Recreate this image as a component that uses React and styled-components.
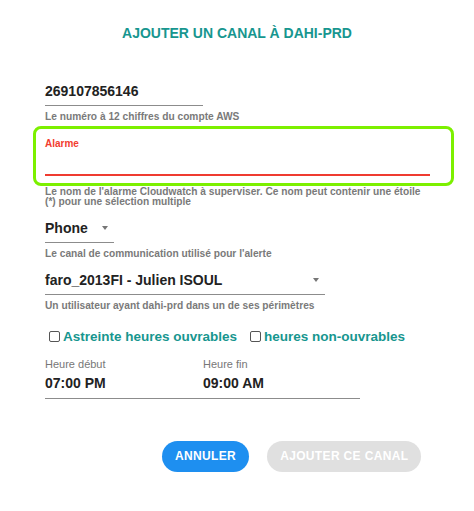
import styled, { createGlobalStyle } from "styled-components";

const GlobalStyle = createGlobalStyle`
  body {
    margin: 0;
    background: #ffffff;
    font-family: "Liberation Sans", Arial, sans-serif;
  }
`;

const Dialog = styled.div`
  width: 474px;
  height: 511px;
  box-sizing: border-box;
  padding: 24px 0 0 45px;
`;

const Title = styled.h2`
  margin: 0 0 0 -45px;
  text-align: center;
  font-size: 14px;
  line-height: 18px;
  font-weight: 700;
  color: #17968f;
`;

const Field = styled.div`
  width: ${(props) => props.width}px;
  margin-top: ${(props) => props.top}px;
  display: flex;
  align-items: center;
  justify-content: space-between;
  padding-bottom: 5px;
  border-bottom: 1px solid #8c8c8c;
  font-size: 14px;
  line-height: 18px;
  font-weight: 700;
  color: #222;
`;

const Helper = styled.div`
  width: 386px;
  margin-top: ${(props) => props.top}px;
  font-size: 10.2px;
  line-height: 10.5px;
  font-weight: 700;
  color: #7a7a7a;
`;

const Highlight = styled.div`
  width: 421px;
  height: 60px;
  box-sizing: border-box;
  margin: 3px 0 0 -12px;
  padding: 9px 21px 0 9px;
  border: 3px solid #7cf000;
  border-radius: 8px;
`;

const ErrorLabel = styled.div`
  font-size: 10px;
  line-height: 12px;
  font-weight: 700;
  color: #f23c2f;
`;

const ErrorLine = styled.div`
  height: 24px;
  border-bottom: 2px solid #ef3b30;
`;

const Caret = styled.span`
  width: 0;
  height: 0;
  margin-right: 6px;
  border-left: 3.5px solid transparent;
  border-right: 3.5px solid transparent;
  border-top: 4px solid #767676;
`;

const CheckRow = styled.div`
  display: flex;
  align-items: center;
  gap: 13px;
  margin: 17px 0 0 4px;
`;

const Check = styled.label`
  display: flex;
  align-items: center;
  gap: 3px;
  font-size: 13.5px;
  line-height: 16px;
  font-weight: 700;
  color: #17968f;
`;

const Box = styled.span`
  width: 9px;
  height: 9px;
  border: 1px solid #555;
  border-radius: 2px;
  background: #fff;
`;

const TimeRow = styled.div`
  display: grid;
  grid-template-columns: 158px 157px;
  width: 315px;
  margin-top: 12px;
  padding-bottom: 6px;
  border-bottom: 1px solid #8c8c8c;
`;

const TimeLabel = styled.div`
  font-size: 11px;
  line-height: 14px;
  color: #777;
`;

const TimeValue = styled.div`
  margin-top: 3px;
  font-size: 14px;
  line-height: 18px;
  font-weight: 700;
  color: #222;
`;

const Actions = styled.div`
  display: flex;
  gap: 18px;
  margin: 42px 0 0 117px;
`;

const Button = styled.button`
  height: 31px;
  padding: 0 13px;
  border: none;
  border-radius: 16px;
  font-family: "Liberation Sans", Arial, sans-serif;
  font-size: 12px;
  letter-spacing: 0.35px;
  font-weight: 700;
  color: #fff;
  background: ${(props) => (props.disabled ? "#e0e0e0" : "#1e8ff0")};
`;

export default function App() {
  return (
    <>
      <GlobalStyle />
      <Dialog>
        <Title>AJOUTER UN CANAL À DAHI-PRD</Title>
        <Field width={158} top={40}>269107856146</Field>
        <Helper top={6}>Le numéro à 12 chiffres du compte AWS</Helper>
        <Highlight>
          <ErrorLabel>Alarme</ErrorLabel>
          <ErrorLine />
        </Highlight>
        <Helper top={1}>
          Le nom de l'alarme Cloudwatch à superviser. Ce nom peut contenir une étoile (*) pour une sélection multiple
        </Helper>
        <Field width={69} top={11}>
          Phone
          <Caret />
        </Field>
        <Helper top={6}>Le canal de communication utilisé pour l'alerte</Helper>
        <Field width={280} top={12}>
          faro_2013FI - Julien ISOUL
          <Caret />
        </Field>
        <Helper top={6}>Un utilisateur ayant dahi-prd dans un de ses périmètres</Helper>
        <CheckRow>
          <Check>
            <Box />
            Astreinte heures ouvrables
          </Check>
          <Check>
            <Box />
            heures non-ouvrables
          </Check>
        </CheckRow>
        <TimeRow>
          <div>
            <TimeLabel>Heure début</TimeLabel>
            <TimeValue>07:00 PM</TimeValue>
          </div>
          <div>
            <TimeLabel>Heure fin</TimeLabel>
            <TimeValue>09:00 AM</TimeValue>
          </div>
        </TimeRow>
        <Actions>
          <Button>ANNULER</Button>
          <Button disabled>AJOUTER CE CANAL</Button>
        </Actions>
      </Dialog>
    </>
  );
}
